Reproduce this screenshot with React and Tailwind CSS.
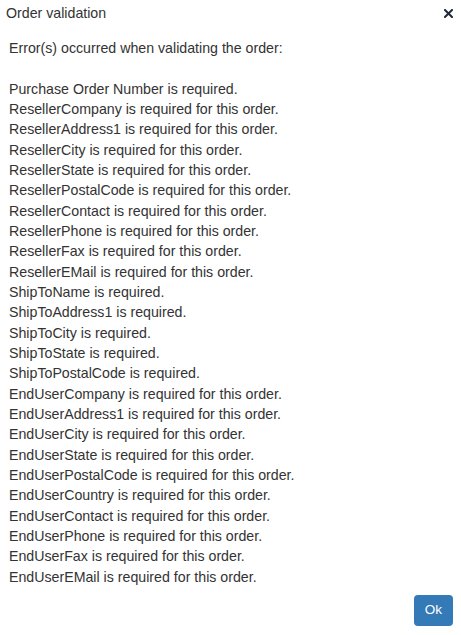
import React from "react";

const messages = [
  "Purchase Order Number is required.",
  "ResellerCompany is required for this order.",
  "ResellerAddress1 is required for this order.",
  "ResellerCity is required for this order.",
  "ResellerState is required for this order.",
  "ResellerPostalCode is required for this order.",
  "ResellerContact is required for this order.",
  "ResellerPhone is required for this order.",
  "ResellerFax is required for this order.",
  "ResellerEMail is required for this order.",
  "ShipToName is required.",
  "ShipToAddress1 is required.",
  "ShipToCity is required.",
  "ShipToState is required.",
  "ShipToPostalCode is required.",
  "EndUserCompany is required for this order.",
  "EndUserAddress1 is required for this order.",
  "EndUserCity is required for this order.",
  "EndUserState is required for this order.",
  "EndUserPostalCode is required for this order.",
  "EndUserCountry is required for this order.",
  "EndUserContact is required for this order.",
  "EndUserPhone is required for this order.",
  "EndUserFax is required for this order.",
  "EndUserEMail is required for this order.",
];

export default function App() {
  return (
    <div className="w-[461px] h-[635px] bg-white text-[#333] font-['Liberation_Sans',Arial,sans-serif] text-[14.2px]">
      <div className="flex items-center justify-between pl-[6px] pr-[8px] h-[26px]">
        <span className="leading-[20px]">Order validation</span>
        <button aria-label="Close" className="flex items-center justify-center w-[9px] h-[9px]">
          <svg width="9" height="9" viewBox="0 0 9 9">
            <path d="M1 1 L8 8 M8 1 L1 8" stroke="#1f2937" strokeWidth="2" strokeLinecap="square" />
          </svg>
        </button>
      </div>
      <div className="pl-[9px] pt-[12px] leading-[20.33px]">
        <p>Error(s) occurred when validating the order:</p>
        <p>&nbsp;</p>
        {messages.map((m) => (
          <p key={m}>{m}</p>
        ))}
      </div>
      <div className="flex justify-end pr-[8px] pt-[8px]">
        <button className="w-[39px] h-[31px] rounded-[4px] bg-[#337ab7] text-white text-[13.5px]">
          Ok
        </button>
      </div>
    </div>
  );
}
